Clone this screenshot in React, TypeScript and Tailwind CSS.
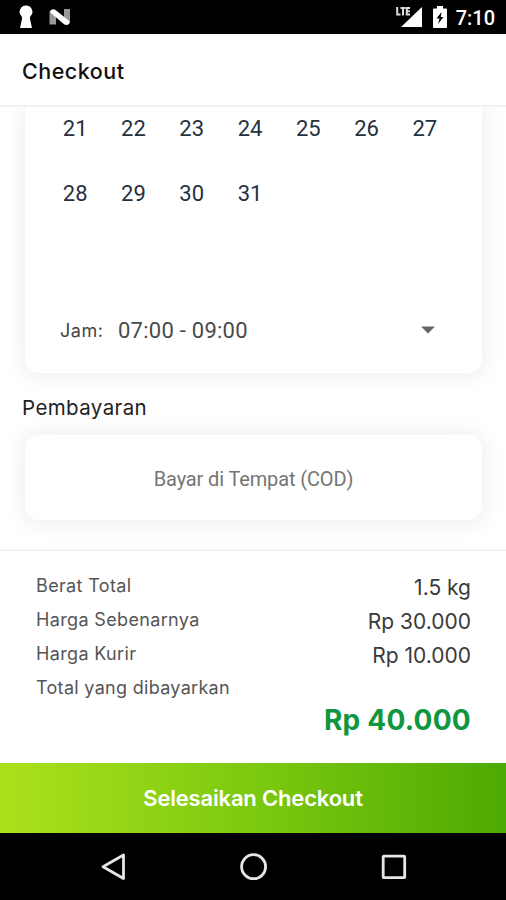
import { ReactNode } from "react";

const days = [21, 22, 23, 24, 25, 26, 27, 28, 29, 30, 31];

const rows = [
  { label: "Berat Total", value: "1.5 kg" },
  { label: "Harga Sebenarnya", value: "Rp 30.000" },
  { label: "Harga Kurir", value: "Rp 10.000" },
];

function StatusBar() {
  return (
    <div className="h-[34px] shrink-0 bg-black flex items-center justify-between pl-[19px] pr-[11px]">
      <div className="flex items-center gap-[16px]">
        <svg width="14" height="24" viewBox="0 0 14 24" fill="#fff">
          <path d="M7 .5a6.3 6.3 0 0 1 4.500 10.800c-.7.9-.6 2-.3 3.400L13 23H1l1.800-8.300c.3-1.400.4-2.500-.3-3.400A6.3 6.3 0 0 1 7 .5z" />
        </svg>
        <svg width="22" height="18" viewBox="0 0 22 18">
          <path d="M.500 3.500 7 8v8.500H.500zM15 1h6v14l-6-5z" fill="#999" />
          <path d="M1 4.200C1 1.500 4.300.3 6.500 1.900L19.700 12.600c1.900 1.700.7 4.400-2.200 4.400-1 0-1.900-.4-2.700-1z" fill="#fff" />
        </svg>
      </div>
      <div className="flex items-center">
        <svg width="27" height="22" viewBox="0 0 27 22">
          <path d="M26 1v20H5z" fill="#fff" />
          <path d="M0 0h14.500v10.500H0z" fill="#000" />
          <path d="M1.200 1v7.500h3.300M4.500 2h5M7 2v7.500M14 2h-3.200v6.500H14M11 5.200h2.800" fill="none" stroke="#ddd" strokeWidth="2" />
        </svg>
        <svg className="ml-[10px]" width="14" height="22" viewBox="0 0 14 22">
          <path d="M4 0h6v2.500h3q1 0 1 1v17.500q0 1-1 1H1q-1 0-1-1V3.500q0-1 1-1h3z" fill="#fff" />
          <path d="M8.500 6 3.500 12.500h3L5 18l5.500-7H7.800z" fill="#000" />
        </svg>
        <span className="ml-[9px] pt-px font-['Roboto'] font-medium text-[20px] leading-6 text-white">7:10</span>
      </div>
    </div>
  );
}

function Card({ children, className }: { children: ReactNode; className: string }) {
  return (
    <div className={`ml-[25px] w-[457px] bg-white shadow-[0_1px_20px_5px_rgba(0,0,0,0.06)] ${className}`}>
      {children}
    </div>
  );
}

function NavBar() {
  return (
    <div className="h-[67px] shrink-0 bg-black flex items-center justify-between pl-[99px] pr-[98px]">
      <svg width="28" height="30" viewBox="0 0 28 30" fill="none" stroke="#e6e6e6" strokeWidth="2.800" strokeLinejoin="round">
        <path d="M24.500 3v23.500L4 14.800z" />
      </svg>
      <svg width="28" height="28" viewBox="0 0 28 28" fill="none" stroke="#e6e6e6" strokeWidth="2.800">
        <circle cx="13.600" cy="13.700" r="12" />
      </svg>
      <svg width="28" height="28" viewBox="0 0 28 28" fill="none" stroke="#e6e6e6" strokeWidth="2.800">
        <rect x="3.200" y="3.200" width="21.500" height="21.500" rx="0.800" />
      </svg>
    </div>
  );
}

export default function App() {
  return (
    <div className="w-[506px] h-[900px] overflow-hidden bg-white flex flex-col font-['Inter',sans-serif] text-[#222]">
      <StatusBar />

      <header className="h-[73px] shrink-0 border-b-2 border-[#f1f1f1] flex items-center pt-[2px] pl-[22px]">
        <h1 className="text-[21.500px] leading-7 font-medium text-[#111] tracking-[0.5px]">Checkout</h1>
      </header>

      <main className="h-[442px] shrink-0 overflow-hidden">
        <Card className="h-[266px] rounded-b-[14px] flex flex-col">
          <div className="grid grid-cols-7 w-[408px] ml-[21px] h-[130px] -mt-[11px]">
            {days.map((day) => (
              <div key={day} className="h-[65px] flex items-center justify-center font-['Roboto'] text-[22px] text-[#263140]">
                {day}
              </div>
            ))}
          </div>
          <div className="mt-[84px] h-10 flex items-center pl-[35px] pr-[47px]">
            <span className="w-[58px] text-[18px] text-[#444] tracking-[0.5px]">Jam:</span>
            <span className="font-['Roboto'] text-[22px] text-[#4a4a4a] tracking-[0.25px]">07:00 - 09:00</span>
            <svg className="ml-auto" width="14" height="8" viewBox="0 0 14 8" fill="#666">
              <path d="M0 .5h14L7 7.500z" />
            </svg>
          </div>
        </Card>
        <h2 className="h-[62px] pt-[21px] pl-[22px] text-[20.500px] leading-7 text-[#222] tracking-[0.4px]">Pembayaran</h2>
        <Card className="h-[85px] rounded-[14px] flex items-center justify-center">
          <span className="pt-[3px] font-['Roboto'] text-[20px] text-[#757575] tracking-[-0.13px]">Bayar di Tempat (COD)</span>
        </Card>
      </main>

      <section className="h-[214px] shrink-0 border-t-2 border-[#f3f3f3] pt-[18px] pl-[36px] pr-[35px]">
        {rows.map((row) => (
          <div key={row.label} className="h-[34px] flex justify-between">
            <span className="text-[18px] leading-[34px] text-[#555] tracking-[0.35px]">{row.label}</span>
            <span className="pt-[2px] text-[21px] leading-[34px] text-[#3a3a3a]">{row.value}</span>
          </div>
        ))}
        <p className="text-[18px] leading-[34px] text-[#555] tracking-[0.3px]">Total yang dibayarkan</p>
        <p className="-mt-[2px] text-right text-[28px] leading-[34px] font-bold text-[#0f9640] tracking-[0.25px]">Rp 40.000</p>
      </section>

      <button className="h-[70px] shrink-0 pt-px bg-linear-to-r from-[#abe11c] via-[#7cc910] to-[#4daa02] text-white text-[22px] font-semibold tracking-[-0.18px]">
        Selesaikan Checkout
      </button>

      <NavBar />
    </div>
  );
}
